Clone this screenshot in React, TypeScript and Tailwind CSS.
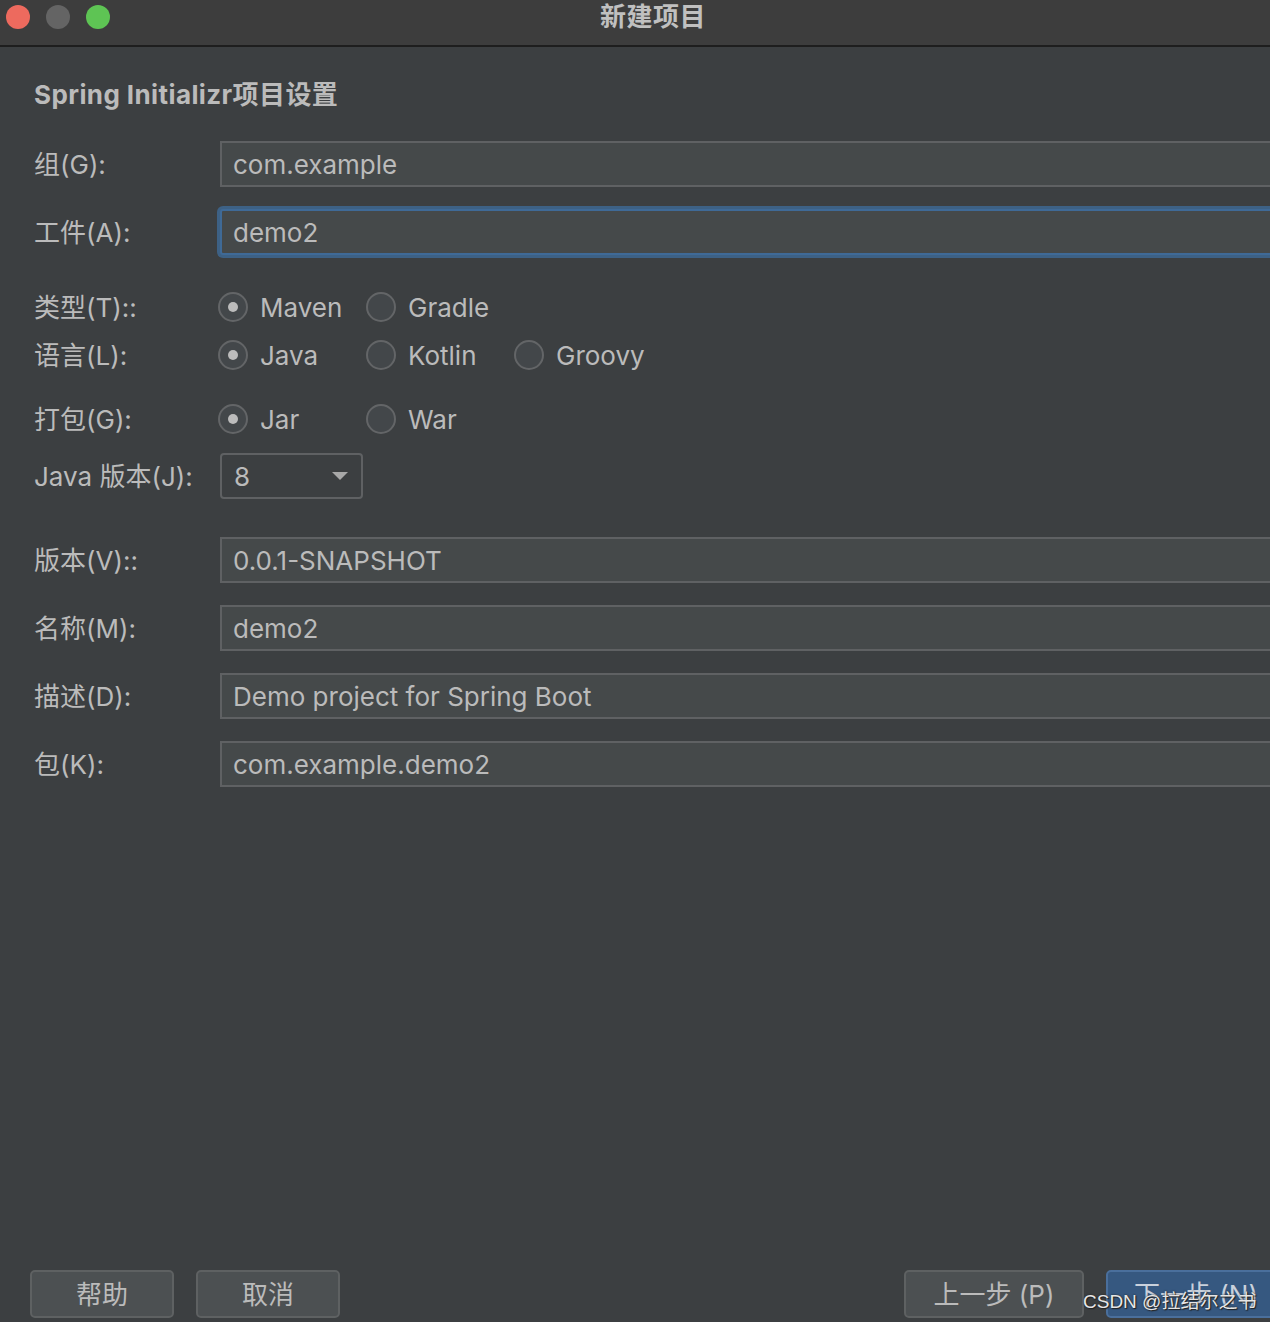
import React from "react";

const font = { fontFamily: "Inter, 'Noto Sans CJK SC', sans-serif" };

function Field({ value, focused }: { value: string; focused?: boolean }) {
  return (
    <div
      className={
        "h-[46px] flex-1 mr-[-60px] flex items-center pl-[11px] bg-[#45494a] text-[#bbbbbb] text-[26px] " +
        (focused
          ? "border-2 border-[#3f6a97] shadow-[0_0_0_3px_#3d6185] rounded-[3px]"
          : "border-2 border-[#5f6163]")
      }
    >
      {value}
    </div>
  );
}

function Row({ label, children, className }: { label: string; children: React.ReactNode; className?: string }) {
  return (
    <div className={"flex items-center " + (className || "")}>
      <div className="w-[186px] shrink-0 text-[26px] text-[#bbbbbb]">{label}</div>
      {children}
    </div>
  );
}

function Radio({ label, checked }: { label: string; checked?: boolean }) {
  return (
    <div className="w-[148px] flex items-center gap-[12px]">
      <div className="w-[30px] h-[30px] rounded-full border-2 border-[#636567] bg-[#43474a] flex items-center justify-center">
        {checked && <div className="w-[10px] h-[10px] rounded-full bg-[#bcbcbc]" />}
      </div>
      <span className="text-[26px] text-[#bbbbbb]">{label}</span>
    </div>
  );
}

function RadioRow({ label, options, className }: { label: string; options: string[]; className?: string }) {
  return (
    <div className={"h-[40px] flex items-center " + (className || "")}>
      <div className="w-[184px] shrink-0 text-[26px] text-[#bbbbbb]">{label}</div>
      {options.map((o, i) => (
        <Radio key={o} label={o} checked={i === 0} />
      ))}
    </div>
  );
}

export default function App() {
  return (
    <div className="w-[1270px] h-[1322px] overflow-hidden bg-[#3c3f41] flex flex-col relative" style={font}>
      {/* title bar */}
      <div className="h-[47px] shrink-0 bg-[#3d3d3d] border-b-2 border-[#1e1e1e] flex items-center">
        <div className="flex items-center gap-[16px] pl-[6px] pb-[11px]">
          <div className="w-[24px] h-[24px] rounded-full bg-[#ed6a5e]" />
          <div className="w-[24px] h-[24px] rounded-full bg-[#646464]" />
          <div className="w-[24px] h-[24px] rounded-full bg-[#5ec454]" />
        </div>
        <span className="ml-[490px] pb-[11px] text-[26px] font-bold text-[#c0c0c0] leading-[34px] tracking-[0.5px]">
          新建项目
        </span>
      </div>

      <div className="flex flex-col px-[34px]">
        <div className="mt-[31px] h-[34px] leading-[34px] text-[26px] font-bold text-[#bbbbbb] tracking-[0.4px]">
          Spring Initializr项目设置
        </div>

        <Row label="组(G):" className="mt-[29px]">
          <Field value="com.example" />
        </Row>
        <Row label="工件(A):" className="mt-[22px]">
          <Field value="demo2" focused />
        </Row>

        <RadioRow label="类型(T)::" options={["Maven", "Gradle"]} className="mt-[32px]" />
        <RadioRow label="语言(L):" options={["Java", "Kotlin", "Groovy"]} className="mt-[8px]" />
        <RadioRow label="打包(G):" options={["Jar", "War"]} className="mt-[24px]" />

        <Row label="Java 版本(J):" className="mt-[14px]">
          <div className="w-[143px] h-[46px] rounded-[4px] border-2 border-[#5f6163] flex items-center justify-between pl-[12px] pr-[12px]">
            <span className="text-[26px] text-[#bbbbbb]">8</span>
            <svg width="18" height="10" viewBox="0 0 18 10">
              <path d="M1 1 L17 1 L9 9 Z" fill="#a8a8a8" />
            </svg>
          </div>
        </Row>

        <Row label="版本(V)::" className="mt-[38px]">
          <Field value="0.0.1-SNAPSHOT" />
        </Row>
        <Row label="名称(M):" className="mt-[22px]">
          <Field value="demo2" />
        </Row>
        <Row label="描述(D):" className="mt-[22px]">
          <Field value="Demo project for Spring Boot" />
        </Row>
        <Row label="包(K):" className="mt-[22px]">
          <Field value="com.example.demo2" />
        </Row>
      </div>

      {/* buttons */}
      <div className="mt-auto mb-[4px] h-[48px] flex items-center pl-[30px]">
        <div className="w-[144px] h-[48px] rounded-[5px] bg-[#4c5052] border-2 border-[#5e6162] flex items-center justify-center text-[26px] text-[#bbbbbb]">
          帮助
        </div>
        <div className="ml-[22px] w-[144px] h-[48px] rounded-[5px] bg-[#4c5052] border-2 border-[#5e6162] flex items-center justify-center text-[26px] text-[#bbbbbb]">
          取消
        </div>
        <div className="ml-auto w-[180px] h-[48px] rounded-[5px] bg-[#4c5052] border-2 border-[#5e6162] flex items-center justify-center text-[26px] text-[#bbbbbb]">
          上一步 (P)
        </div>
        <div className="ml-[22px] w-[190px] mr-[-26px] h-[48px] rounded-[5px] bg-[#365880] border-2 border-[#4a6f9c] flex items-center pl-[26px] text-[26px] text-[#c9d1dc]">
          下一步 (N)
        </div>
      </div>

      {/* watermark */}
      <div
        className="absolute left-[1083px] top-[1289px] text-[19px] leading-[26px] text-[#e6e6e6] whitespace-nowrap"
        style={{ fontFamily: "'Liberation Sans', 'Noto Sans CJK SC', sans-serif", textShadow: "0 0 2px #222, 1px 1px 1px #222" }}
      >
        CSDN @拉结尔之书
      </div>
    </div>
  );
}
